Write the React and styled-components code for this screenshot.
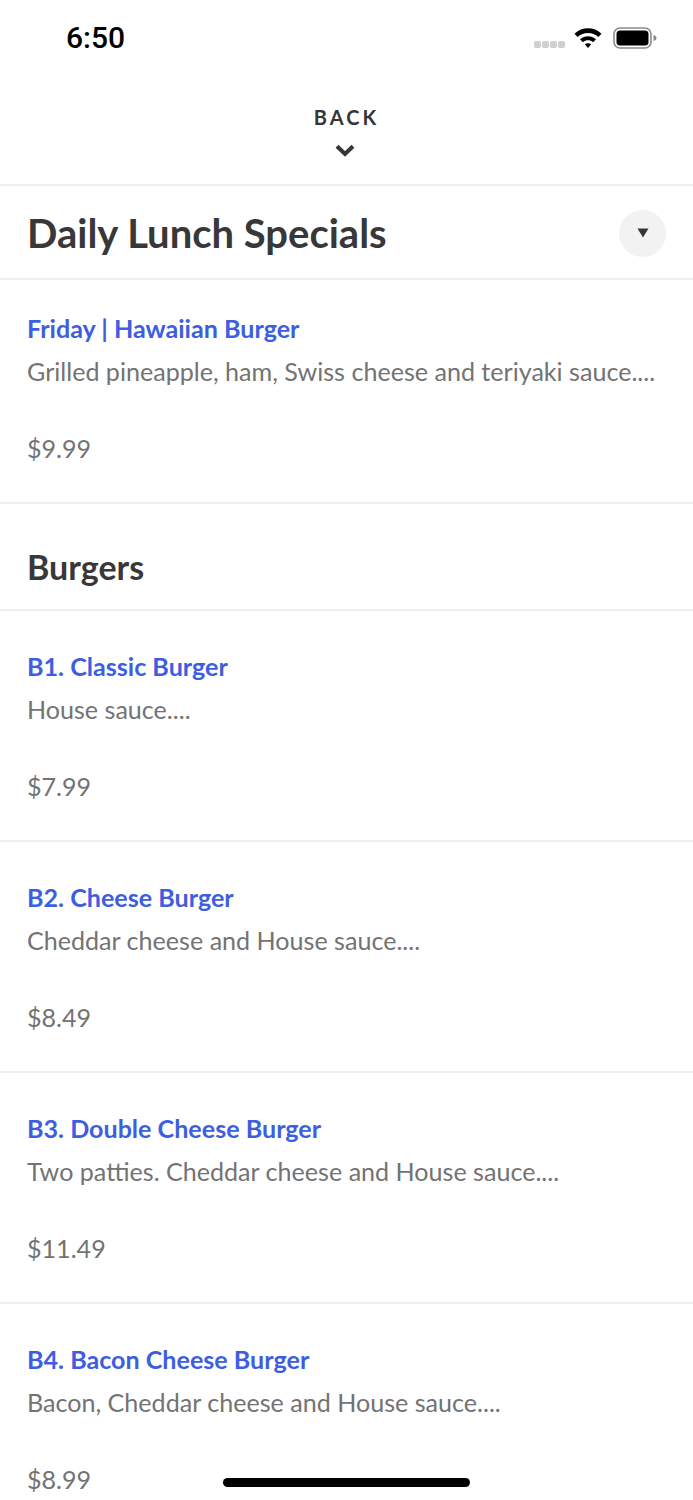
import React from "react";
import styled, { createGlobalStyle } from "styled-components";

const GlobalStyle = createGlobalStyle`
  html, body {
    margin: 0;
    padding: 0;
    background: #fff;
  }
  body {
    font-family: Lato, "Liberation Sans", sans-serif;
  }
`;

const Screen = styled.div`
  position: relative;
  width: 693px;
  height: 1500px;
  overflow: hidden;
  background: #fff;
`;

const StatusBar = styled.div`
  height: 77px;
  box-sizing: border-box;
  padding: 0 36px 2px 66px;
  display: flex;
  align-items: center;
  justify-content: space-between;
`;

const Time = styled.span`
  font-family: Roboto, "Liberation Sans", sans-serif;
  font-size: 30px;
  font-weight: 500;
  color: #000;
`;

const StatusIcons = styled.div`
  display: flex;
  align-items: center;
  gap: 9px;
`;

const SignalDots = styled.div`
  display: flex;
  gap: 1px;
  margin-top: 14px;
`;

const SignalDot = styled.span`
  width: 7px;
  height: 7px;
  border-radius: 2px;
  background: #cfcfcf;
`;

const Battery = styled.svg`
  margin-left: 2px;
`;

const BackBar = styled.div`
  height: 109px;
  display: flex;
  flex-direction: column;
  align-items: center;
  padding-top: 28px;
  box-sizing: border-box;
  border-bottom: 2px solid #efefef;
`;

const BackLabel = styled.span`
  font-size: 20px;
  font-weight: 700;
  line-height: 25px;
  letter-spacing: 3px;
  color: #363636;
`;

const Chevron = styled.svg`
  margin-top: 14px;
  margin-right: 3px;
`;

const SectionHeader = styled.div`
  height: ${(p) => p.$height}px;
  box-sizing: border-box;
  padding: ${(p) => p.$top || 0}px 27px 0 27px;
  display: flex;
  align-items: center;
  justify-content: space-between;
  border-bottom: 2px solid #efefef;
`;

const SectionTitle = styled.h2`
  margin: 0;
  font-size: ${(p) => p.$size}px;
  font-weight: 700;
  color: #383838;
`;

const ToggleButton = styled.div`
  width: 47px;
  height: 47px;
  border-radius: 50%;
  background: #f2f2f2;
  display: flex;
  align-items: center;
  justify-content: center;
`;

const Item = styled.div`
  height: ${(p) => p.$height || 231}px;
  box-sizing: border-box;
  padding: ${(p) => p.$top || 39}px 27px 0;
  border-bottom: 2px solid #efefef;
`;

const ItemName = styled.div`
  font-size: 25.1px;
  font-weight: 700;
  line-height: 32px;
  color: #3d5ee1;
`;

const ItemDesc = styled.div`
  margin-top: 11px;
  font-size: 25.1px;
  line-height: 32px;
  color: #737373;
`;

const ItemPrice = styled.div`
  margin-top: 45px;
  font-size: 25.1px;
  line-height: 32px;
  color: #737373;
`;

const HomeIndicator = styled.div`
  position: absolute;
  left: 223px;
  bottom: 13px;
  width: 247px;
  height: 9px;
  border-radius: 5px;
  background: #000;
`;

const items = [
  { name: "B1. Classic Burger", desc: "House sauce....", price: "$7.99" },
  { name: "B2. Cheese Burger", desc: "Cheddar cheese and House sauce....", price: "$8.49" },
  { name: "B3. Double Cheese Burger", desc: "Two patties. Cheddar cheese and House sauce....", price: "$11.49" },
  { name: "B4. Bacon Cheese Burger", desc: "Bacon, Cheddar cheese and House sauce....", price: "$8.99" },
];

const App = () => (
  <Screen>
    <GlobalStyle />
    <StatusBar>
      <Time>6:50</Time>
      <StatusIcons>
        <SignalDots>
          <SignalDot />
          <SignalDot />
          <SignalDot />
          <SignalDot />
        </SignalDots>
        <svg width="28" height="21" viewBox="0 0 27 20.25">
          <path d="M0.5 6.5 C8 -0.5 19 -0.5 26.5 6.5 L23.6 9.6 C17.8 4.4 9.2 4.4 3.4 9.6 Z" fill="#000" />
          <path d="M5.8 11.8 C10.4 7.8 16.6 7.8 21.2 11.8 L18.4 14.6 C15.4 12.2 11.6 12.2 8.6 14.6 Z" fill="#000" />
          <path d="M10.4 16.6 C12.3 15.2 14.7 15.2 16.6 16.6 L13.5 20.2 Z" fill="#000" />
        </svg>
        <Battery width="44" height="22" viewBox="0 0 44 22">
          <rect x="1" y="1" width="37" height="20" rx="6" fill="none" stroke="#8a8a8a" strokeWidth="1.6" />
          <rect x="3.5" y="3.5" width="32" height="15" rx="3.5" fill="#000" />
          <path d="M40.5 8 C42.5 8.5 43.5 9.5 43.5 11 C43.5 12.5 42.5 13.5 40.5 14 Z" fill="#8a8a8a" />
        </Battery>
      </StatusIcons>
    </StatusBar>
    <BackBar>
      <BackLabel>BACK</BackLabel>
      <Chevron width="20" height="13" viewBox="0 0 20 13">
        <path d="M2 2.2 L10 10 L18 2.2" fill="none" stroke="#363636" strokeWidth="4" />
      </Chevron>
    </BackBar>
    <SectionHeader $height={94} $top={2}>
      <SectionTitle $size={40}>Daily Lunch Specials</SectionTitle>
      <ToggleButton>
        <svg width="12" height="10" viewBox="0 0 12 10">
          <path d="M0.5 0.5 H11.5 L6 9.5 Z" fill="#363636" />
        </svg>
      </ToggleButton>
    </SectionHeader>
    <Item $height={224} $top={32}>
      <ItemName>Friday | Hawaiian Burger</ItemName>
      <ItemDesc>Grilled pineapple, ham, Swiss cheese and teriyaki sauce....</ItemDesc>
      <ItemPrice>$9.99</ItemPrice>
    </Item>
    <SectionHeader $height={107} $top={20}>
      <SectionTitle $size={34}>Burgers</SectionTitle>
    </SectionHeader>
    {items.map((item) => (
      <Item key={item.name}>
        <ItemName>{item.name}</ItemName>
        <ItemDesc>{item.desc}</ItemDesc>
        <ItemPrice>{item.price}</ItemPrice>
      </Item>
    ))}
    <HomeIndicator />
  </Screen>
);

export default App;
